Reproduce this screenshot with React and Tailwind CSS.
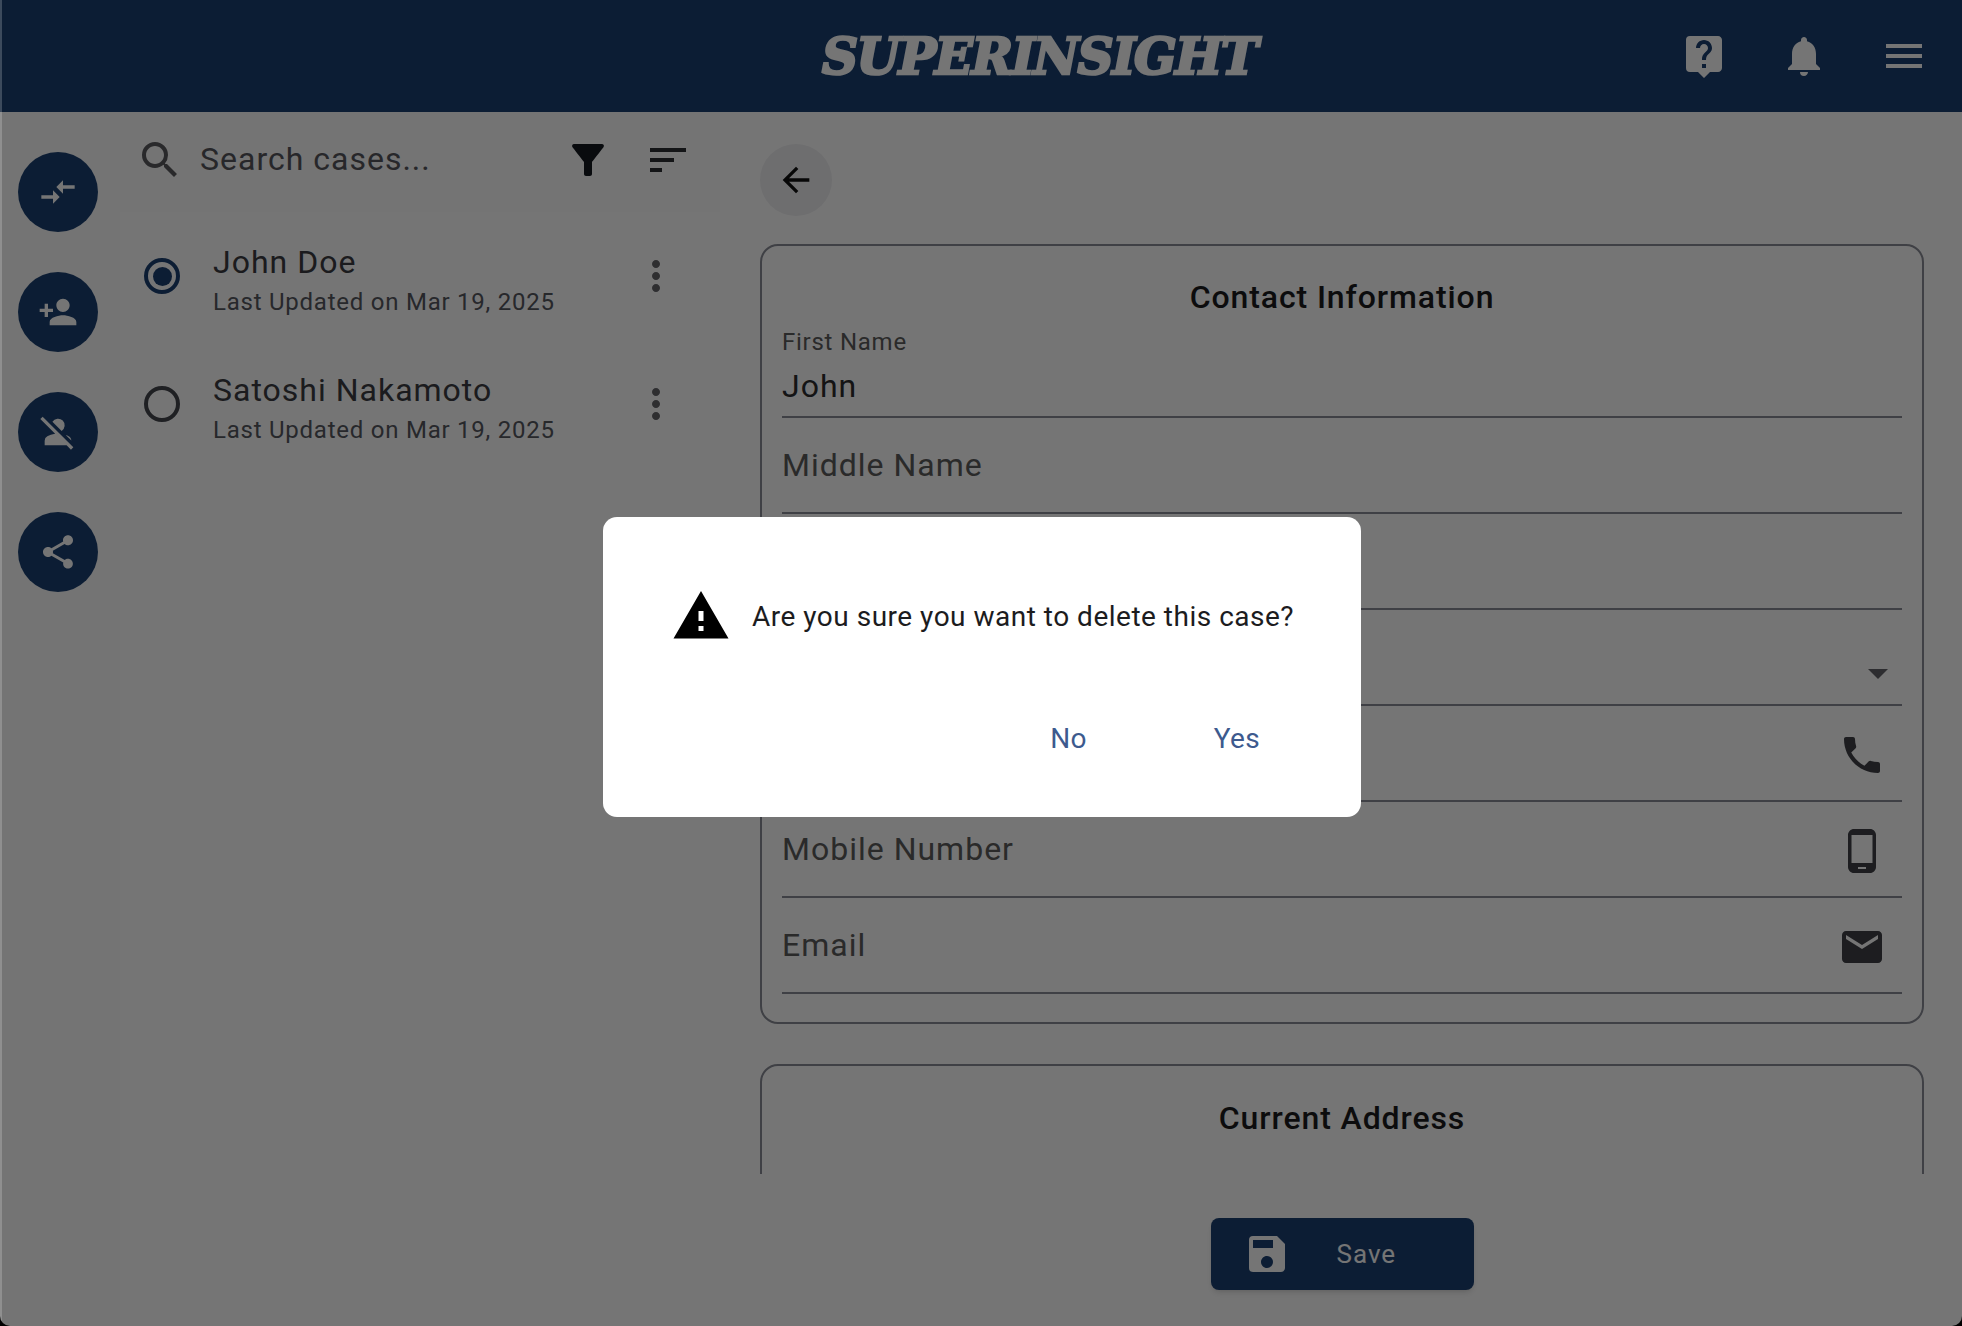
import React from 'react';
import {
  MdLiveHelp, MdNotifications, MdMenu, MdCompareArrows, MdPersonAdd, MdPersonOff, MdShare,
  MdSearch, MdFilterAlt, MdSort, MdMoreVert, MdArrowBack, MdPhone, MdPhoneAndroid, MdEmail,
  MdWarning, MdSave, MdArrowDropDown,
} from 'react-icons/md';

const roboto = { fontFamily: 'Roboto, sans-serif' };

const railActions = [MdCompareArrows, MdPersonAdd, MdPersonOff, MdShare];

const cases = [
  { name: 'John Doe', updated: 'Last Updated on Mar 19, 2025', selected: true },
  { name: 'Satoshi Nakamoto', updated: 'Last Updated on Mar 19, 2025', selected: false },
];

// rows that sit behind the dialog have no visible label
const fields = [
  { label: 'Middle Name' },
  { label: '' },
  { label: '', Icon: MdArrowDropDown, small: true },
  { label: '', Icon: MdPhone },
  { label: 'Mobile Number', Icon: MdPhoneAndroid },
  { label: 'Email', Icon: MdEmail },
];

function Field({ label, Icon, small }) {
  return (
    <div className="h-[96px] border-b-2 border-[#8a8d96] flex items-center justify-between">
      <span className="text-[32px] tracking-[1px] text-[#5c5c5c]">{label}</span>
      {Icon && !small && <Icon className="w-[48px] h-[48px] text-[#3f4046] mr-[16px] mt-[4px]" />}
      {Icon && small && <Icon className="w-[48px] h-[48px] text-[#62636a] mt-[32px]" />}
    </div>
  );
}

export default function App() {
  return (
    <div className="relative w-[1962px] h-[1326px] overflow-hidden bg-white flex flex-col" style={roboto}>
      <header className="h-[112px] shrink-0 bg-[#1c4172] flex items-center pr-[34px]">
        <div className="ml-[822px] mt-[2px] text-white text-[50px] font-bold italic leading-none tracking-[-1.5px] [-webkit-text-stroke:2.5px_white] [font-family:'DejaVu_Serif',serif]">SUPERINSIGHT</div>
        <div className="ml-auto flex gap-[52px]">
          <MdLiveHelp className="w-[48px] h-[48px] text-white" />
          <MdNotifications className="w-[48px] h-[48px] text-white" />
          <MdMenu className="w-[48px] h-[48px] text-white" />
        </div>
      </header>

      <div className="flex-1 flex min-h-0">
        <aside className="w-[120px] shrink-0 pt-[40px] pl-[18px] flex flex-col gap-[40px] bg-[#fcfcfc]">
          {railActions.map((Icon, i) => (
            <button key={i} className="w-[80px] h-[80px] rounded-full bg-[#1c4172] flex items-center justify-center">
              <Icon className="w-[40px] h-[40px] text-white" />
            </button>
          ))}
        </aside>

        <section className="w-[600px] shrink-0 flex flex-col">
          <div className="h-[100px] flex items-start pt-[24px] pl-[16px] bg-[#fcfcfc]">
            <MdSearch className="w-[48px] h-[48px] text-[#5a5a5e]" />
            <span className="ml-[16px] text-[32px] leading-[46px] tracking-[1px] text-[#56565c]">Search cases...</span>
            <MdFilterAlt className="w-[48px] h-[48px] text-[#14181f] ml-auto" />
            <MdSort className="w-[48px] h-[48px] text-[#2c2e34] ml-[32px] mr-[28px]" />
          </div>
          {cases.map((c) => (
            <div key={c.name} className="h-[128px] flex items-center pl-[24px] pr-[40px]">
              <div className={`w-[36px] h-[36px] rounded-full border-[4px] flex items-center justify-center ${c.selected ? 'border-[#1c4172]' : 'border-[#44464e]'}`}>
                {c.selected && <div className="w-[19px] h-[19px] rounded-full bg-[#1c4172]" />}
              </div>
              <div className="ml-[33px] pt-[12px] flex flex-col">
                <span className="text-[32px] leading-[40px] tracking-[1px] text-[#3c3c42]">{c.name}</span>
                <span className="text-[24px] leading-[40px] tracking-[0.76px] text-[#55575f]">{c.updated}</span>
              </div>
              <MdMoreVert className="w-[48px] h-[48px] text-[#64646a] ml-auto" />
            </div>
          ))}
        </section>

        <main className="flex-1 min-w-0 flex flex-col pl-[40px] pr-[38px]">
          <div className="h-[132px] shrink-0 pt-[32px]">
            <button className="w-[72px] h-[72px] rounded-full bg-[#efeff2] flex items-center justify-center">
              <MdArrowBack className="w-[40px] h-[40px] text-[#111]" />
            </button>
          </div>

          <div className="h-[930px] shrink-0 overflow-hidden flex flex-col gap-[40px]">
            <div className="h-[780px] shrink-0 border-2 border-[#8a8d96] rounded-[18px] px-[20px]">
              <h2 className="text-center text-[32px] font-medium tracking-[0.9px] text-[#1c1c1e] leading-[40px] pt-[31px] h-[72px]">Contact Information</h2>
              <div className="h-[100px] border-b-2 border-[#8a8d96]">
                <div className="text-[24px] leading-[32px] tracking-[0.75px] text-[#5c5c5c] pt-[8px]">First Name</div>
                <div className="text-[32px] leading-[40px] tracking-[1px] text-[#2c2c2e] pt-[8px]">John</div>
              </div>
              {fields.map((f, i) => <Field key={i} {...f} />)}
            </div>
            <div className="h-[300px] shrink-0 border-2 border-[#8a8d96] rounded-[18px] px-[20px]">
              <h2 className="text-center text-[32px] font-medium tracking-[0.9px] text-[#1c1c1e] leading-[40px] pt-[32px]">Current Address</h2>
            </div>
          </div>

          <div className="flex-1 pt-[8px] flex items-center justify-center">
            <button className="w-[263px] h-[72px] rounded-[8px] bg-[#1c4172] shadow-md flex items-center pl-[32px] text-white">
              <MdSave className="w-[48px] h-[48px]" />
              <span className="ml-[46px] text-[26px] tracking-[1px]">Save</span>
            </button>
          </div>
        </main>
      </div>

      <div className="absolute inset-0 bg-black/54 flex items-start justify-start">
        <div className="ml-[603px] mt-[517px] w-[758px] h-[300px] rounded-[14px] bg-white flex flex-col">
          <div className="flex items-center ml-[68px] mt-[69px]">
            <MdWarning className="w-[60px] h-[60px] text-black" />
            <span className="ml-[21px] mt-[2px] text-[28px] tracking-[0.5px] text-[#1c1c1e]">Are you sure you want to delete this case?</span>
          </div>
          <div className="mt-auto mb-[57px] flex justify-end pr-[101px] gap-[127px] text-[28px] tracking-[0.3px] text-[#3d5a8e]">
            <span>No</span>
            <span>Yes</span>
          </div>
        </div>
      </div>

      {/* window edge: light hairline on the left, rounded bottom corners */}
      <div className="absolute left-0 top-0 bottom-0 w-[2px] bg-white/20" />
      <div className="absolute inset-0 rounded-b-[10px] shadow-[0_0_0_20px_black] pointer-events-none" />
    </div>
  );
}
